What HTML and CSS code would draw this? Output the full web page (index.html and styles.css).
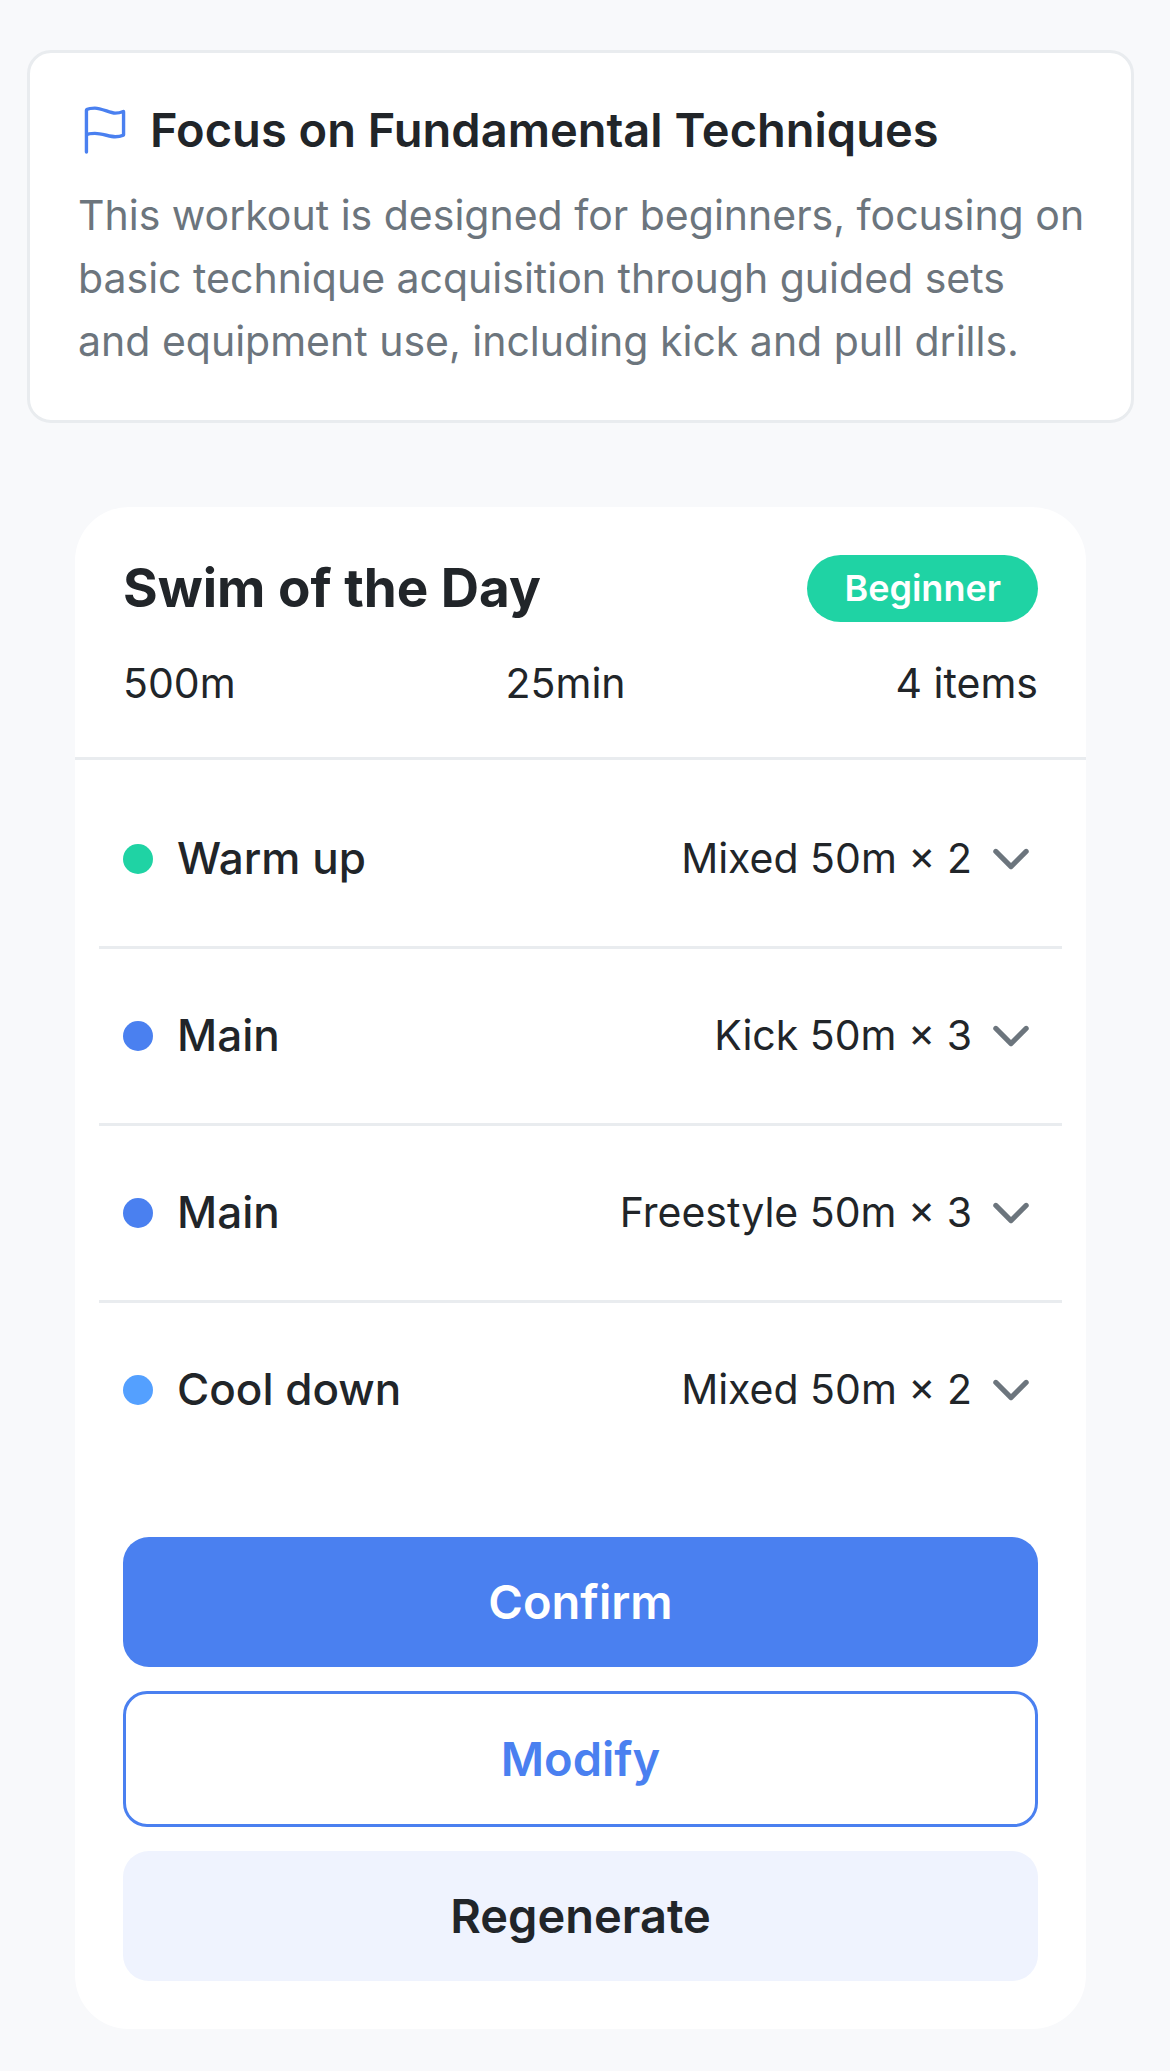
FILE: index.html
```html
<!DOCTYPE html>
<html lang="en">
<head>
<meta charset="utf-8">
<meta name="viewport" content="width=device-width, initial-scale=1">
<title>Swim of the Day</title>
<link rel="stylesheet" href="styles.css">
</head>
<body>
<svg class="sprite" aria-hidden="true">
  <symbol id="chevron" viewBox="0 0 512 512">
    <path d="M112 184l144 144 144-144" fill="none" stroke="currentColor" stroke-width="48" stroke-linecap="round" stroke-linejoin="round"/>
  </symbol>
</svg>
<main class="page">
  <section class="focus">
    <div class="focus-head">
      <svg class="icon flag" viewBox="0 0 512 512" aria-hidden="true">
        <path d="M80 464V68.14a8 8 0 014-6.9C91.81 56.66 112.92 48 160 48c64 0 145 48 192 48a199.53 199.53 0 0077.23-15.77 2 2 0 012.77 1.85v219.36a4 4 0 01-2.39 3.65C421.37 308.7 392.33 320 352 320c-48 0-128-32-192-32s-80 16-80 16" fill="none" stroke="currentColor" stroke-width="32" stroke-linecap="round" stroke-miterlimit="10"/>
      </svg>
      <h2 class="focus-title">Focus on Fundamental Techniques</h2>
    </div>
    <p class="focus-text">This workout is designed for beginners, focusing on basic technique acquisition through guided sets<br> and equipment use, including kick and pull drills.</p>
  </section>

  <section class="workout">
    <header class="workout-head">
      <div class="title-row">
        <h1 class="workout-title">Swim of the Day</h1>
        <span class="badge">Beginner</span>
      </div>
      <div class="stats">
        <span>500m</span>
        <span>25min</span>
        <span>4 items</span>
      </div>
    </header>

    <ul class="sets">
      <li class="set">
        <button class="set-row" type="button" aria-expanded="false">
          <span class="dot dot-warm"></span>
          <span class="set-name">Warm up</span>
          <span class="set-detail">Mixed 50m × 2</span>
          <svg class="icon chevron" aria-hidden="true"><use href="#chevron"/></svg>
        </button>
      </li>
      <li class="set">
        <button class="set-row" type="button" aria-expanded="false">
          <span class="dot dot-main"></span>
          <span class="set-name">Main</span>
          <span class="set-detail">Kick 50m × 3</span>
          <svg class="icon chevron" aria-hidden="true"><use href="#chevron"/></svg>
        </button>
      </li>
      <li class="set">
        <button class="set-row" type="button" aria-expanded="false">
          <span class="dot dot-main"></span>
          <span class="set-name">Main</span>
          <span class="set-detail">Freestyle 50m × 3</span>
          <svg class="icon chevron" aria-hidden="true"><use href="#chevron"/></svg>
        </button>
      </li>
      <li class="set">
        <button class="set-row" type="button" aria-expanded="false">
          <span class="dot dot-cool"></span>
          <span class="set-name">Cool down</span>
          <span class="set-detail">Mixed 50m × 2</span>
          <svg class="icon chevron" aria-hidden="true"><use href="#chevron"/></svg>
        </button>
      </li>
    </ul>

    <div class="actions">
      <button class="btn btn-primary" type="button">Confirm</button>
      <button class="btn btn-outline" type="button">Modify</button>
      <button class="btn btn-soft" type="button">Regenerate</button>
    </div>
  </section>
</main>
</body>
</html>
```
FILE: styles.css
```css
:root {
  --bg: #f8f9fb;
  --card: #ffffff;
  --line: #e9ecef;
  --text: #212529;
  --muted: #6c757d;
  --blue: #4a80f0;
  --green: #1fd3a4;
  --sky: #54a0ff;
  --soft: #eff3fe;
}

* {
  box-sizing: border-box;
}

body {
  margin: 0;
  background: var(--bg);
  color: var(--text);
  font-family: Inter, "Liberation Sans", sans-serif;
  font-size: 41px;
  line-height: 63px;
}

h1, h2, p, ul {
  margin: 0;
  padding: 0;
}

button {
  font: inherit;
  color: inherit;
  cursor: pointer;
}

.sprite {
  display: none;
}

.icon {
  flex: none;
  width: 54px;
  height: 54px;
}

.page {
  display: flex;
  flex-direction: column;
  gap: 84px;
  padding: 50px 36px 42px 27px;
}

.focus {
  padding: 48px 36px 47px 48px;
  background: var(--card);
  border: 3px solid var(--line);
  border-radius: 24px;
}

.focus-head {
  display: flex;
  align-items: center;
  gap: 18px;
  margin-bottom: 25px;
}

.flag {
  color: var(--blue);
}

.focus-title {
  font-size: 47px;
  font-weight: 600;
  line-height: 58px;
}

.focus-text {
  color: var(--muted);
}

.workout {
  margin: 0 48px;
  background: var(--card);
  border-radius: 54px;
}

.workout-head {
  padding: 48px 48px 42px;
  border-bottom: 3px solid var(--line);
}

.title-row,
.stats {
  display: flex;
  align-items: center;
  justify-content: space-between;
}

.title-row {
  margin-bottom: 30px;
}

.workout-title {
  font-size: 53px;
  font-weight: 700;
  line-height: 67px;
}

.badge {
  padding: 0 37px;
  border-radius: 34px;
  background: var(--green);
  color: #ffffff;
  font-size: 36px;
  font-weight: 600;
  line-height: 67px;
}

.sets {
  padding: 12px 24px;
  list-style: none;
}

.set + .set {
  border-top: 3px solid var(--line);
}

.set-row {
  display: flex;
  align-items: center;
  width: 100%;
  padding: 55px 24px 56px;
  border: 0;
  background: none;
  text-align: left;
}

.dot {
  flex: none;
  width: 30px;
  height: 30px;
  margin-right: 24px;
  border-radius: 50%;
}

.dot-warm {
  background: var(--green);
}

.dot-main {
  background: var(--blue);
}

.dot-cool {
  background: var(--sky);
}

.set-name {
  flex: 1;
  font-size: 44px;
  font-weight: 500;
}

.chevron {
  margin-left: 12px;
  color: var(--muted);
}

.actions {
  display: flex;
  flex-direction: column;
  gap: 24px;
  padding: 48px;
}

.btn {
  padding: 36px 48px;
  border: 0;
  border-radius: 26px;
  font-size: 47px;
  font-weight: 600;
  line-height: 58px;
}

.btn-primary {
  background: var(--blue);
  color: #ffffff;
}

.btn-outline {
  border: 3px solid var(--blue);
  border-radius: 24px;
  background: var(--card);
  color: var(--blue);
}

.btn-soft {
  background: var(--soft);
}
```
